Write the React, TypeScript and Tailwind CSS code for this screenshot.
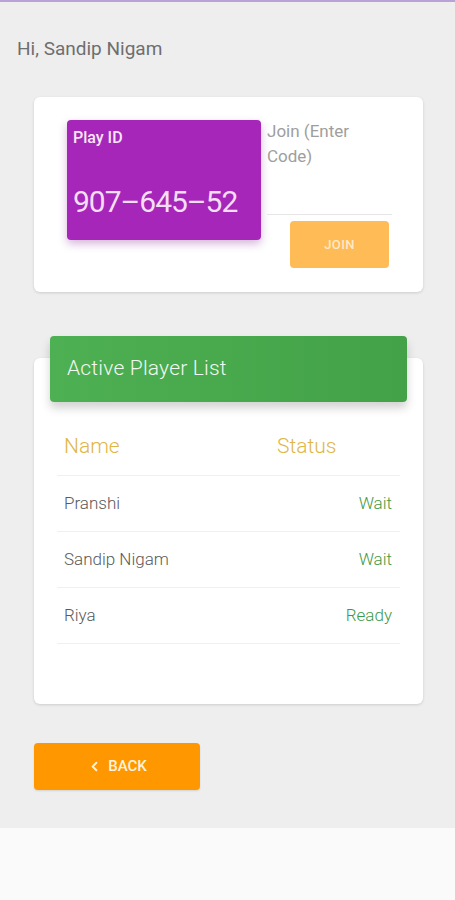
import { ChevronLeft } from 'lucide-react';

type Player = {
  name: string;
  status: string;
};

const players: Player[] = [
  { name: 'Pranshi', status: 'Wait' },
  { name: 'Sandip Nigam', status: 'Wait' },
  { name: 'Riya', status: 'Ready' },
];

export default function App() {
  return (
    <div className="w-[455px] h-[900px] flex flex-col bg-[#fafafa] font-['Roboto','Liberation_Sans',sans-serif]">
      <div className="h-[828px] bg-[#eeeeee] border-t-2 border-[#b9a3d6] flex flex-col">
        <p className="pt-[35px] pl-[17px] text-[19px] leading-6 text-[#6e6e6e]">Hi, Sandip Nigam</p>

        {/* Play id / join card */}
        <div className="mt-[36px] ml-[34px] w-[389px] h-[195px] bg-white rounded-md shadow-[0_1px_3px_rgba(0,0,0,0.14)] flex pt-[23px] pl-[33px]">
          <div className="w-[194px] h-[120px] bg-[#a626b9] rounded-sm shadow-[0_4px_8px_rgba(120,20,140,0.3)] flex flex-col pl-[6px] pt-[8px]">
            <span className="text-base leading-5 font-medium text-[#f6e6f8]">Play ID</span>
            <span className="mt-[36px] text-[30px] leading-9 text-[#f3def6] tracking-[-1px]">907–645–52</span>
          </div>
          <div className="ml-[6px] w-[125px] flex flex-col">
            <div className="h-[96px] border-b border-[#e6e6e6] text-[17px] leading-[25px] text-[#9e9e9e] -mt-[1px]">
              Join (Enter
              <br />
              Code)
            </div>
            <button className="mt-[6px] ml-[23px] w-[99px] h-[47px] bg-[#ffbb55] rounded-sm text-[13px] font-medium text-[#fde9c8] tracking-wide">
              JOIN
            </button>
          </div>
        </div>

        {/* Active player list */}
        <div className="mt-[66px] ml-[34px] w-[389px] h-[346px] bg-white rounded-md shadow-[0_1px_3px_rgba(0,0,0,0.14)] flex flex-col">
          <div className="-mt-[22px] mx-4 h-[66px] rounded-sm bg-gradient-to-r from-[#4db052] to-[#43a147] shadow-[0_6px_10px_rgba(0,0,0,0.18)] flex items-center pl-[17px]">
            <span className="text-[21px] font-light text-[#f1f8f1] tracking-[0.2px]">Active Player List</span>
          </div>
          <div className="mt-4 mx-[23px] flex flex-col">
            <div className="h-[58px] flex items-center pl-[7px] border-b border-[#f0f0f0] text-[21px] font-light text-[#dfb646]">
              <span className="w-[213px]">Name</span>
              <span>Status</span>
            </div>
            {players.map((p) => (
              <div
                key={p.name}
                className="h-[56px] flex items-center justify-between pl-[7px] pr-[8px] border-b border-[#f0f0f0] text-[17px] font-light"
              >
                <span className="text-[#5a5a5a]">{p.name}</span>
                <span className="text-[#3f9a44]">{p.status}</span>
              </div>
            ))}
          </div>
        </div>

        <button className="mt-[39px] ml-[34px] w-[166px] h-[47px] bg-[#ff9800] rounded-sm shadow-[0_1px_2px_rgba(0,0,0,0.12)] flex items-center justify-center gap-[6px] text-[15px] font-medium text-[#fff3df]">
          <ChevronLeft size={15} strokeWidth={3} />
          BACK
        </button>
      </div>
    </div>
  );
}
